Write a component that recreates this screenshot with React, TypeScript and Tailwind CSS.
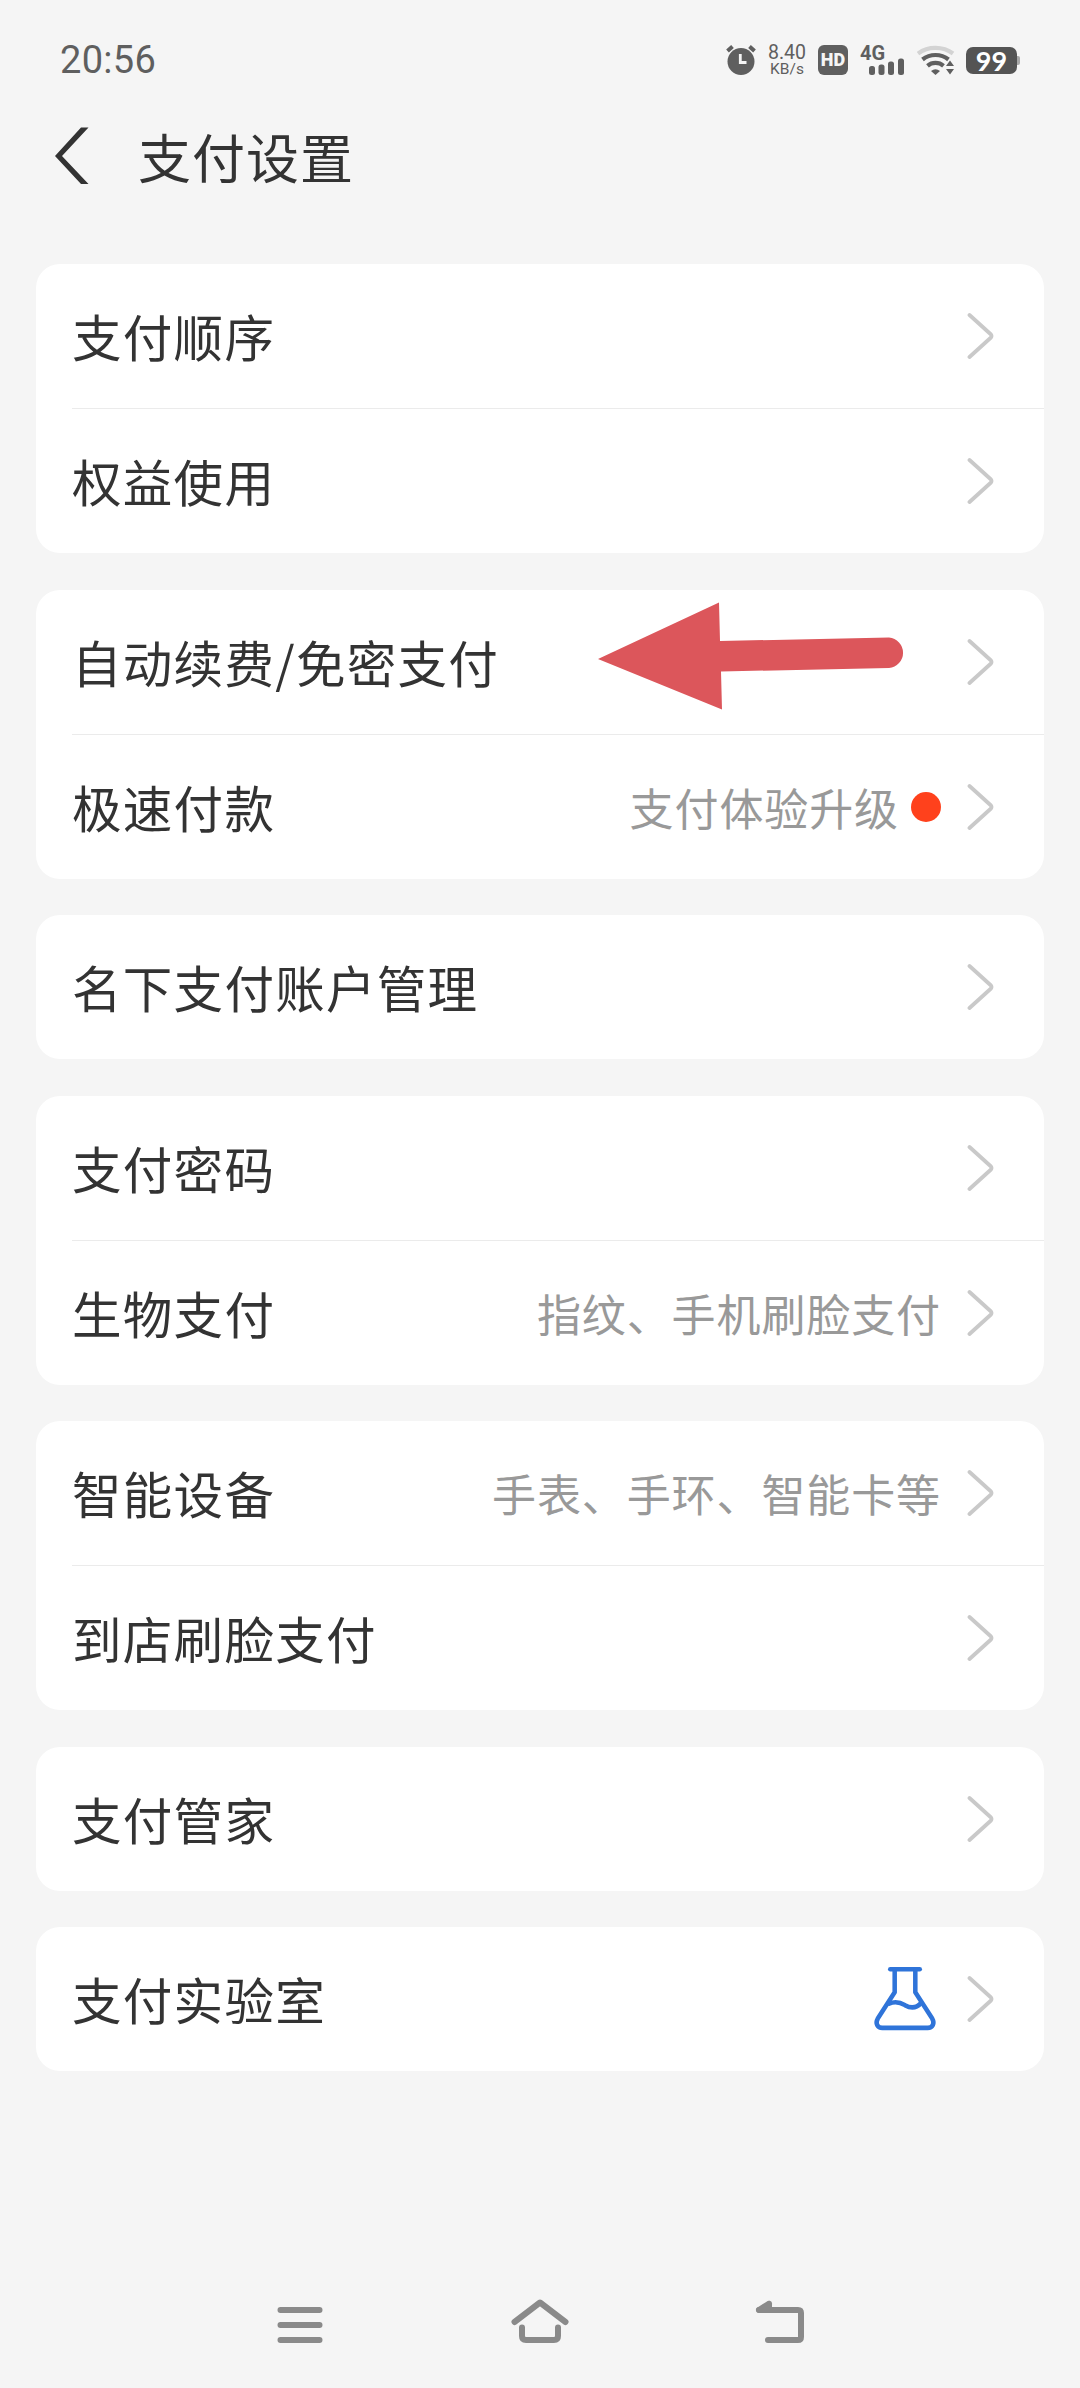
import type { ReactNode } from "react";

type Item = {
  label: string;
  value?: string;
  dot?: boolean;
  icon?: ReactNode;
  arrow?: boolean;
};

const FlaskIcon = () => (
  <svg className="mr-[3px]" width="66" height="66" viewBox="0 0 64 64" fill="none" stroke="#2f74d9" strokeWidth="4.4" strokeLinecap="round" strokeLinejoin="round">
    <path d="M17.7 3.2H46.3" />
    <path d="M22 4V25.5L5.6 51C2.8 56 5.5 60 10 60H54C58.5 60 61.2 56 58.4 51L42 25.5V4" />
    <path d="M16.5 36.5C23 33.5 28 35.5 32 38C38 41.5 43 41 47.5 36" />
  </svg>
);

const groups: Item[][] = [
  [{ label: "支付顺序" }, { label: "权益使用" }],
  [
    { label: "自动续费/免密支付", arrow: true },
    { label: "极速付款", value: "支付体验升级", dot: true },
  ],
  [{ label: "名下支付账户管理" }],
  [{ label: "支付密码" }, { label: "生物支付", value: "指纹、手机刷脸支付" }],
  [{ label: "智能设备", value: "手表、手环、智能卡等" }, { label: "到店刷脸支付" }],
  [{ label: "支付管家" }],
  [{ label: "支付实验室", icon: <FlaskIcon /> }],
];

const StatusBar = () => (
  <div className="flex h-[120px] items-center justify-between px-[60px] text-[#5f5f5f]">
    <span className="font-[Roboto] text-[38px] leading-none tracking-[0.3px]">20:56</span>
    <div className="flex items-center">
      {/* Alarm */}
      <svg width="30" height="30" viewBox="0 0 30 30" className="mr-[11px]">
        <circle cx="15" cy="16.5" r="13.5" fill="currentColor" />
        <path d="M1.5 6L6.5 1.5M28.5 6L23.5 1.5" stroke="currentColor" strokeWidth="4" />
        <path d="M14.3 9V17.5H20.5" fill="none" stroke="#f5f5f5" strokeWidth="2.8" />
      </svg>
      <div className="mr-[11px] flex w-[40px] flex-col items-center font-[Roboto]">
        <span className="text-[19.5px] leading-[18px]">8.40</span>
        <span className="text-[15.5px] leading-[15px]">KB/s</span>
      </div>
      <div className="mr-[12px] flex size-[30px] items-center justify-center rounded-[6px] bg-[#5f5f5f] font-[Roboto] text-[18px] font-black leading-none text-[#f5f5f5]">
        HD
      </div>
      {/* Signal */}
      <div className="relative mr-[13px] h-[30px] w-[44px]">
        <span className="absolute left-0 top-0 font-[Roboto] text-[20px] font-bold leading-[16px]">4G</span>
        <svg width="44" height="30" viewBox="0 0 44 30" fill="currentColor">
          <rect x="9" y="21" width="6" height="9" rx="2.5" />
          <rect x="18.5" y="19.5" width="6" height="10.5" rx="2.5" />
          <rect x="28" y="16.5" width="6" height="13.5" rx="2.5" />
          <rect x="38" y="13.5" width="6" height="16.5" rx="2.5" />
        </svg>
      </div>
      {/* Wifi */}
      <svg width="38" height="30" viewBox="0 0 38 30" className="mr-[11px]" fill="none">
        <path d="M1 8.5C11 1 26 1 36 8.5" stroke="#d3d3d3" strokeWidth="4.2" />
        <path d="M5.5 14.5C13 8.5 24 8.5 31.5 14.5" stroke="currentColor" strokeWidth="4.2" />
        <path d="M10.5 20.8C15 17 22 17 26.5 20.8" stroke="currentColor" strokeWidth="4.2" />
        <path d="M14 26C17 23.8 20 23.8 23 26L18.5 30Z" fill="currentColor" />
        <path d="M33 15.5L37 21H29ZM33 29.5L37 24H29Z" fill="currentColor" />
      </svg>
      {/* Battery */}
      <div className="flex h-[27px] w-[51px] items-center justify-center rounded-[7px] bg-[#545454] font-[Lato] text-[27px] font-bold leading-none text-white">
        99
      </div>
      <div className="h-[9px] w-[3px] rounded-r-[2px] bg-[#a8a8a8]" />
    </div>
  </div>
);

const ChevronRight = () => (
  <svg width="28" height="50" viewBox="0 0 28 50" fill="none" stroke="#c9c9c9" strokeWidth="3.8" strokeLinecap="round" strokeLinejoin="round">
    <path d="M3.5 4L25 23.5Q26 25 25 26.5L3.5 46" />
  </svg>
);

const Row = ({ item, first }: { item: Item; first: boolean }) => (
  <div className={first ? "pl-[36px]" : "pl-[36px] before:block before:h-px before:bg-[#ebebeb]"}>
    <div className="relative flex h-[144px] items-center justify-between pr-[50px]">
      <span className="text-[49.5px] leading-none tracking-[1.3px] text-[#333]">{item.label}</span>
      <div className="flex items-center">
        {item.value && (
          <span className="text-[44px] leading-none tracking-[0.9px] text-[#999]">{item.value}</span>
        )}
        {item.dot && <span className="ml-[12px] size-[30px] rounded-full bg-[#ff411c]" />}
        {item.icon}
        <span className="ml-[25px]">
          <ChevronRight />
        </span>
      </div>
      {item.arrow && (
        <svg className="absolute left-[524px] top-[10px]" width="312" height="112" viewBox="0 0 312 112" fill="#dc565b">
          <path d="M2 59L123 2.5L124 41L293 37.5A15.3 15.3 0 0 1 293 68L125 71.5L126 109.5Z" />
        </svg>
      )}
    </div>
  </div>
);

const NavBar = () => (
  <div className="mt-auto flex h-[126px] items-center justify-center gap-[180px]">
    <svg width="60" height="60" viewBox="0 0 60 60" fill="none" stroke="#8a8a8a" strokeWidth="6" strokeLinecap="round">
      <path d="M10.5 15H49.5M10.5 30H49.5M10.5 45H49.5" />
    </svg>
    <svg width="60" height="60" viewBox="0 0 60 60" fill="none" stroke="#8a8a8a" strokeWidth="6" strokeLinecap="round" strokeLinejoin="round">
      <path d="M4.5 27L30 7.5L55.5 27" />
      <path d="M12 32.5V41Q12 45 16 45H44Q48 45 48 41V32.5" />
    </svg>
    <svg width="60" height="60" viewBox="0 0 60 60" fill="none" stroke="#8a8a8a" strokeWidth="6" strokeLinecap="round" strokeLinejoin="round">
      <path d="M19 8.8L9 15L19 14V8.8" fill="#8a8a8a" />
      <path d="M9 15H48Q51 15 51 18V42Q51 45 48 45H18" />
    </svg>
  </div>
);

const App = () => {
  return (
    <div className="flex h-[2388px] w-[1080px] flex-col bg-[#f5f5f5] font-['Noto_Sans_CJK_SC',sans-serif]">
      <StatusBar />

      <header className="flex h-[144px] items-start pl-[54px] pt-[7px]">
        <svg width="36" height="58" viewBox="0 0 36 58" fill="#333">
          <path d="M27 0.5H34.5L8 29L34.5 57H27L1 29Z" />
        </svg>
        <h1 className="ml-[48px] mt-[3px] text-[53px] leading-none tracking-[1px] text-[#333]">支付设置</h1>
      </header>

      <main className="flex flex-col gap-[36.5px] px-[36px]">
        {groups.map((group) => (
          <section key={group[0].label} className="rounded-[24px] bg-white">
            {group.map((item, i) => (
              <Row key={item.label} item={item} first={i === 0} />
            ))}
          </section>
        ))}
      </main>

      <NavBar />
    </div>
  );
};

export default App;
